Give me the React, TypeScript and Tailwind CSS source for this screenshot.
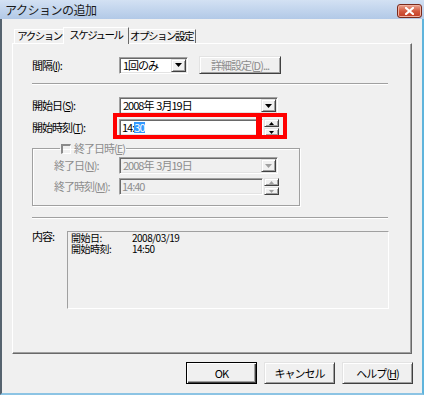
const F = "font-['Noto_Sans_CJK_JP',sans-serif]";

function Tri({ up, color, w = 7, h = 4 }: { up?: boolean; color: string; w?: number; h?: number }) {
  return (
    <svg width={w} height={h} viewBox={`0 0 ${w} ${h}`}>
      <path d={up ? `M0 ${h}H${w}L${w / 2} 0z` : `M0 0H${w}L${w / 2} ${h}z`} fill={color} />
    </svg>
  );
}

const raised =
  "bg-[#f0f0f0] border border-t-[#e3e3e3] border-l-[#e3e3e3] border-r-[#404040] border-b-[#404040] shadow-[inset_1px_1px_0_#fff,inset_-1px_-1px_0_#a0a0a0]";
const sunken =
  "border border-t-[#a0a0a0] border-l-[#a0a0a0] border-r-white border-b-white shadow-[inset_1px_1px_0_#696969,inset_-1px_-1px_0_#e3e3e3]";

function Acc({ pre, k, post = ":" }: { pre: string; k: string; post?: string }) {
  return (
    <span className="whitespace-nowrap">
      {pre}(<span className="underline underline-offset-1">{k}</span>){post}
    </span>
  );
}

function Combo({ text, w, disabled }: { text: string; w: string; disabled?: boolean }) {
  return (
    <div className={`flex h-[17px] ${w} items-stretch p-[1px] ${sunken} ${disabled ? "bg-[#f0f0f0] text-[#8d8d8d]" : "bg-white"}`}>
      <div className="flex flex-1 items-center whitespace-pre pl-[2px] leading-none">{text}</div>
      <div className={`flex w-[15px] items-center justify-center ${raised}`}>
        <Tri color={disabled ? "#a0a0a0" : "#000"} />
      </div>
    </div>
  );
}

function Spin({ disabled }: { disabled?: boolean }) {
  const c = disabled ? "#a0a0a0" : "#000";
  return (
    <div className="ml-[1px] flex h-[17px] w-[15px] flex-col">
      <div className={`flex h-[8px] items-center justify-center ${raised}`}>
        <Tri up color={c} w={5} h={3} />
      </div>
      <div className={`mt-[1px] flex h-[8px] items-center justify-center ${raised}`}>
        <Tri color={c} w={5} h={3} />
      </div>
    </div>
  );
}

function Sep() {
  return <div className="h-[2px] w-[356px] border-t border-t-[#a0a0a0] border-b border-b-white" />;
}

function Btn({ children, def }: { children: React.ReactNode; def?: boolean }) {
  return (
    <div
      className={`flex h-[22px] w-[71px] items-center justify-center leading-none ${
        def
          ? "border border-black shadow-[inset_1px_1px_0_#fff,inset_-1px_-1px_0_#404040,inset_-2px_-2px_0_#a0a0a0] bg-[#f0f0f0]"
          : raised
      }`}
    >
      {children}
    </div>
  );
}

export default function App() {
  return (
    <div className={`flex h-[395px] w-[424px] flex-col overflow-hidden bg-[#f0f0f0] text-[11px] tracking-[-1px] text-black ${F}`}>
      {/* title bar */}
      <div className="flex h-[19px] shrink-0 items-center justify-between bg-gradient-to-b from-[#d3e1f3] to-[#b2c9e7] pl-[5px] pr-[2px]">
        <span className="text-[12px] leading-none tracking-[-0.5px] text-[#1a1a1a]">アクションの追加</span>
        <div className="mt-[2px] flex h-[14px] w-[25px] items-center justify-center rounded-[3px] border border-[#7a2a1c] bg-gradient-to-b from-[#e8a493] via-[#d45a40] to-[#c23c24] shadow-[inset_0_0_0_1px_#f0b0a0]">
          <svg width="9" height="8" viewBox="0 0 9 8">
            <path d="M1 1l7 6M8 1L1 7" stroke="#fff" strokeWidth="2.2" strokeLinecap="square" />
          </svg>
        </div>
      </div>

      {/* body */}
      <div className="flex flex-1 flex-col border-l-[2px] border-r-[2px] border-b-[2px] border-l-[#56636f] border-r-[#5fb4dc] border-b-[#8cc4e4] pl-[10px] pt-[7px]">
        {/* tabs */}
        <div className="ml-[2px] flex h-[17px] shrink-0 items-end whitespace-nowrap text-[10.5px] tracking-[-1.5px]">
          <div className="flex h-[14px] w-[50px] items-center justify-center border-t border-l border-t-white border-l-white leading-none">
            アクション
          </div>
          <div className="relative z-10 -mx-[1px] -mb-[1px] flex h-[17px] w-[66px] items-center justify-center border-t border-l border-r border-t-white border-l-white border-r-[#696969] bg-[#f0f0f0] pb-[2px] leading-none">
            スケジュール
          </div>
          <div className="flex h-[14px] w-[68px] items-center justify-center border-t border-r border-t-white border-r-[#696969] leading-none">
            オプション設定
          </div>
        </div>

        {/* panel */}
        <div className="flex h-[311px] w-[400px] shrink-0 flex-col border border-t-white border-l-white border-r-[#696969] border-b-[#696969] pl-[19px] pt-[12px] shadow-[inset_-1px_-1px_0_#a0a0a0]">
          <div className="flex items-center">
            <div className="w-[87px] leading-none">
              <Acc pre="間隔" k="I" />
            </div>
            <Combo text="1回のみ" w="w-[69px]" />
            <div className={`ml-[11px] flex h-[18px] w-[82px] items-center justify-center whitespace-nowrap leading-none text-[#8d8d8d] ${raised}`}>
              詳細設定(<span className="underline">D</span>)...
            </div>
          </div>

          <div className="mt-[9px]">
            <Sep />
          </div>

          <div className="mt-[12px] flex items-center">
            <div className="w-[87px] leading-none">
              <Acc pre="開始日" k="S" />
            </div>
            <Combo text="2008年  3月19日" w="w-[159px]" />
          </div>

          <div className="relative mt-[5px] flex items-center">
            <div className="w-[87px] leading-none">
              <Acc pre="開始時刻" k="T" />
            </div>
            <div className={`flex h-[17px] w-[144px] items-center bg-white pl-[2px] leading-none ${sunken}`}>
              14:<span className="bg-[#3399ff] text-white">30</span>
            </div>
            <Spin />
            <div className="absolute -top-[6px] left-[81px] h-[26px] w-[147px] border-[4px] border-[#ff0000]" />
            <div className="absolute -top-[6px] left-[226px] h-[26px] w-[29px] border-[4px] border-[#ff0000]" />
          </div>

          <fieldset className="mt-[7px] w-[268px] border border-[#a0a0a0] pb-[10px] pl-[21px] shadow-[inset_1px_1px_0_#fff,1px_1px_0_#fff]">
            <legend className="ml-[6px] flex items-center px-[1px] leading-none text-[#8d8d8d]">
              <span className="mr-[3px] h-[10px] w-[10px] border-t-[2px] border-l-[2px] border-t-[#8a8a8a] border-l-[#8a8a8a] border-r border-b border-r-white border-b-white" />
              <Acc pre="終了日時" k="E" post="" />
            </legend>
            <div className="mt-[3px] flex items-center">
              <div className="w-[65px] leading-none text-[#8d8d8d]">
                <Acc pre="終了日" k="N" />
              </div>
              <Combo text="2008年  3月19日" w="w-[159px]" disabled />
            </div>
            <div className="mt-[4px] flex items-center">
              <div className="w-[65px] leading-none text-[#8d8d8d]">
                <Acc pre="終了時刻" k="M" />
              </div>
              <div className={`flex h-[17px] w-[144px] items-center bg-[#f0f0f0] pl-[2px] leading-none text-[#8d8d8d] ${sunken}`}>
                14:40
              </div>
              <Spin disabled />
            </div>
          </fieldset>

          <div className="mt-[11px]">
            <Sep />
          </div>

          <div className="mt-[12px] flex items-start">
            <div className="w-[35px] leading-none">内容:</div>
            <div className="h-[78px] w-[322px] border border-t-[#a0a0a0] border-l-[#a0a0a0] border-r-white border-b-white pl-[3px] text-[10px] leading-[11px] tracking-[-0.5px]">
              <div className="flex">
                <span className="w-[61px] shrink-0">開始日:</span>
                <span>2008/03/19</span>
              </div>
              <div className="flex">
                <span className="w-[61px] shrink-0">開始時刻:</span>
                <span>14:50</span>
              </div>
            </div>
          </div>
        </div>

        {/* buttons */}
        <div className="mt-[8px] flex justify-end gap-[7px] pr-[9px]">
          <Btn def>OK</Btn>
          <Btn>キャンセル</Btn>
          <Btn>
            <Acc pre="ヘルプ" k="H" post="" />
          </Btn>
        </div>
      </div>
    </div>
  );
}
